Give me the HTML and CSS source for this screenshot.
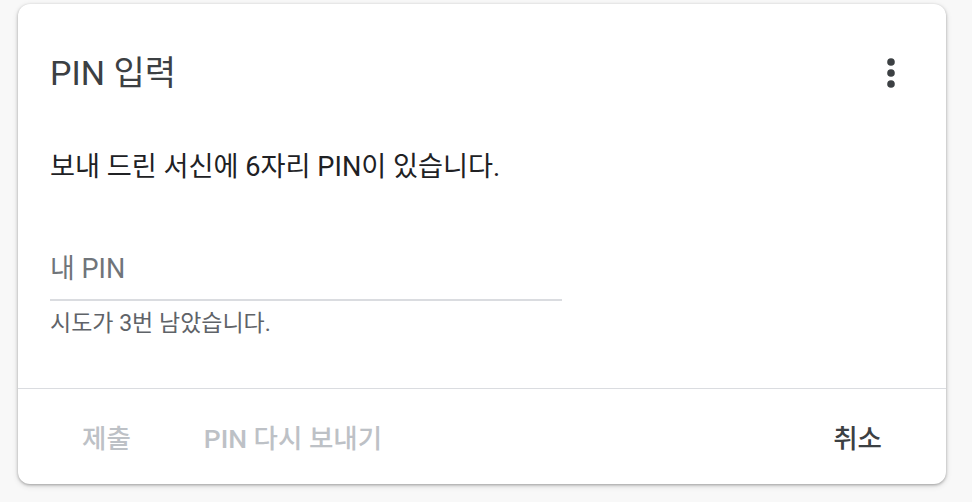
FILE: index.html
```html
<!DOCTYPE html>
<html lang="ko">
<head>
    <meta charset="UTF-8">
    <meta name="viewport" content="width=device-width, initial-scale=1.0">
    <title>PIN 입력</title>
    <link rel="stylesheet" href="styles.css">
</head>
<body>

    <div class="dialog">
        <div class="dialog-head">
            <h1 class="dialog-title">PIN 입력</h1>
            <button class="menu-button" aria-label="더보기">
                <svg width="10" height="30" viewBox="0 0 10 30">
                    <circle cx="5" cy="4" r="3.8" fill="#3c4043"/>
                    <circle cx="5" cy="15" r="3.8" fill="#3c4043"/>
                    <circle cx="5" cy="26" r="3.8" fill="#3c4043"/>
                </svg>
            </button>
        </div>

        <div class="dialog-body">
            <p class="message">보내 드린 서신에 6자리 PIN이 있습니다.</p>

            <div class="pin-field">
                <input type="text" class="pin-input" placeholder="내 PIN">
                <div class="helper">시도가 3번 남았습니다.</div>
            </div>
        </div>

        <div class="dialog-actions">
            <div class="left-actions">
                <button class="action disabled">제출</button>
                <button class="action disabled">PIN 다시 보내기</button>
            </div>
            <button class="action">취소</button>
        </div>
    </div>

</body>
</html>
```

FILE: styles.css
```css
* {
    box-sizing: border-box;
    margin: 0;
    padding: 0;
}

body {
    font-family: Roboto, 'Noto Sans CJK KR', sans-serif;
    background-color: #f8f8f8;
    padding: 4px 26px 18px 18px;
    color: #3c4043;
}

.dialog {
    width: 928px;
    height: 480px;
    background-color: #fff;
    border-radius: 12px;
    box-shadow: 0 1px 3px rgba(0, 0, 0, 0.3), 0 2px 6px rgba(0, 0, 0, 0.12);
    display: flex;
    flex-direction: column;
}

.dialog-head {
    display: flex;
    justify-content: space-between;
    align-items: center;
    padding: 49px 50px 0 32px;
}

.dialog-title {
    font-size: 34px;
    font-weight: 400;
    line-height: 40px;
    color: #3c4043;
}

.menu-button {
    border: none;
    background: none;
    width: 10px;
    height: 30px;
    display: flex;
    cursor: pointer;
}

.dialog-body {
    padding: 0 32px;
    flex: 1;
}

.message {
    font-size: 27.2px;
    line-height: 36px;
    margin-top: 56px;
    color: #202124;
}

.pin-field {
    width: 512px;
    margin-top: 66px;
}

.pin-input {
    width: 100%;
    border: none;
    border-bottom: 2px solid #dadce0;
    font-family: inherit;
    font-size: 27px;
    line-height: 36px;
    height: 50px;
    padding: 0 0 12px;
    outline: none;
    background: transparent;
    color: #202124;
}

.pin-input::placeholder {
    color: #70757a;
}

.helper {
    font-size: 23px;
    line-height: 30px;
    color: #5f6368;
    margin-top: 8px;
}

.dialog-actions {
    border-top: 1px solid #dadce0;
    height: 96px;
    display: flex;
    justify-content: space-between;
    align-items: center;
    padding: 0 64px;
}

.left-actions {
    display: flex;
    gap: 73px;
}

.action {
    border: none;
    background: none;
    font-family: inherit;
    font-size: 26.5px;
    font-weight: 500;
    color: #3c4043;
    padding: 8px 0;
    cursor: pointer;
}

.action.disabled {
    color: #bdc1c6;
    cursor: default;
}
```
